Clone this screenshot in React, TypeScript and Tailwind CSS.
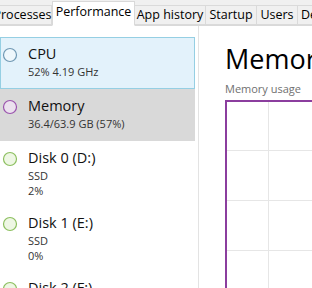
import React from "react";

const font = { fontFamily: '"Open Sans", "Noto Sans", sans-serif' };

function Tab({ label, w, active }: { label: string; w: number; active?: boolean }) {
  return (
    <div
      style={{ width: w }}
      className={
        active
          ? "h-[25px] -mb-px bg-white border border-[#d9d9d9] border-b-white flex items-center justify-center text-[12.5px] text-black z-10 whitespace-nowrap overflow-hidden pb-[3px]"
          : "h-[20px] bg-[#f0f0f0] border border-[#dadada] -ml-px flex items-center justify-center text-[12.5px] text-black whitespace-nowrap overflow-hidden"
      }
    >
      {label}
    </div>
  );
}

function Circle({ stroke, fill }: { stroke: string; fill: string }) {
  return (
    <svg width="16" height="16" viewBox="0 0 16 16" className="shrink-0">
      <circle cx="8" cy="8" r="6.5" stroke={stroke} strokeWidth="1.2" fill={fill} />
    </svg>
  );
}

function Item({
  title,
  lines,
  stroke,
  fill,
  cls,
}: {
  title: string;
  lines: string[];
  stroke: string;
  fill: string;
  cls: string;
}) {
  return (
    <div className={"flex gap-[10px] pl-[1px] pt-[6px] " + cls}>
      <div className="pt-[3px]">
        <Circle stroke={stroke} fill={fill} />
      </div>
      <div className="flex flex-col">
        <div className="text-[14.5px] leading-[20px] text-[#111] whitespace-nowrap">{title}</div>
        {lines.map((l, i) => (
          <div key={i} className="text-[11px] leading-[15px] text-[#333] whitespace-nowrap">
            {l}
          </div>
        ))}
      </div>
    </div>
  );
}

export default function App() {
  return (
    <div style={font} className="w-[312px] h-[288px] overflow-hidden bg-white relative">
      <div className="h-[26px] bg-[#f0f0f0] border-b border-[#d9d9d9] flex items-end pt-[2px]">
        <div className="flex items-end -ml-[7px]">
          <div className="h-[20px] w-[59px] bg-[#f0f0f0] border border-[#dadada] flex items-center justify-center text-[12.5px] whitespace-nowrap">
            Processes
          </div>
          <Tab label="Performance" w={83} active />
          <Tab label="App history" w={72} />
          <Tab label="Startup" w={52} />
          <Tab label="Users" w={42} />
          <div className="h-[20px] w-[40px] bg-[#f0f0f0] border border-[#dadada] -ml-px flex items-center pl-[3px] text-[12.5px] whitespace-nowrap overflow-hidden">
            Details
          </div>
        </div>
      </div>
      <div className="flex">
        <div className="w-[199px] shrink-0 border-r border-[#e3e3e3] pt-[11px] h-[262px]">
          <Item
            title="CPU"
            lines={["52%  4.19 GHz"]}
            stroke="#6f98b3"
            fill="#eef7fc"
            cls="w-[195px] h-[52px] bg-[#e3f2fb] border border-[#95cfe3]"
          />
          <Item
            title="Memory"
            lines={["36.4/63.9 GB (57%)"]}
            stroke="#9a53ad"
            fill="#ebe1ee"
            cls="w-[195px] h-[52px] bg-[#d9d9d9] border border-[#d9d9d9]"
          />
          <Item
            title="Disk 0 (D:)"
            lines={["SSD", "2%"]}
            stroke="#8cbf5f"
            fill="#eef7e4"
            cls="w-[195px] h-[65px] border border-transparent"
          />
          <Item
            title="Disk 1 (E:)"
            lines={["SSD", "0%"]}
            stroke="#8cbf5f"
            fill="#eef7e4"
            cls="w-[195px] h-[65px] border border-transparent"
          />
          <Item
            title="Disk 2 (F:)"
            lines={["SSD", "0%"]}
            stroke="#8cbf5f"
            fill="#eef7e4"
            cls="w-[195px] h-[65px] border border-transparent"
          />
        </div>
        <div className="flex-1 pl-[26px] pt-[16px]">
          <div className="text-[27px] leading-[34px] text-black whitespace-nowrap">Memory</div>
          <div className="text-[11px] leading-[14px] text-[#707070] mt-[6px]">Memory usage</div>
          <div className="mt-[4px] h-[200px] w-[120px] border-l-2 border-t-2 border-[#8b3e9e] relative">
            <div className="absolute left-[41px] top-0 bottom-0 w-px bg-[#e6e6e6]" />
            <div className="absolute top-[48px] left-0 right-0 h-px bg-[#e6e6e6]" />
            <div className="absolute top-[98px] left-0 right-0 h-px bg-[#e6e6e6]" />
            <div className="absolute top-[148px] left-0 right-0 h-px bg-[#e6e6e6]" />
          </div>
        </div>
      </div>
    </div>
  );
}
